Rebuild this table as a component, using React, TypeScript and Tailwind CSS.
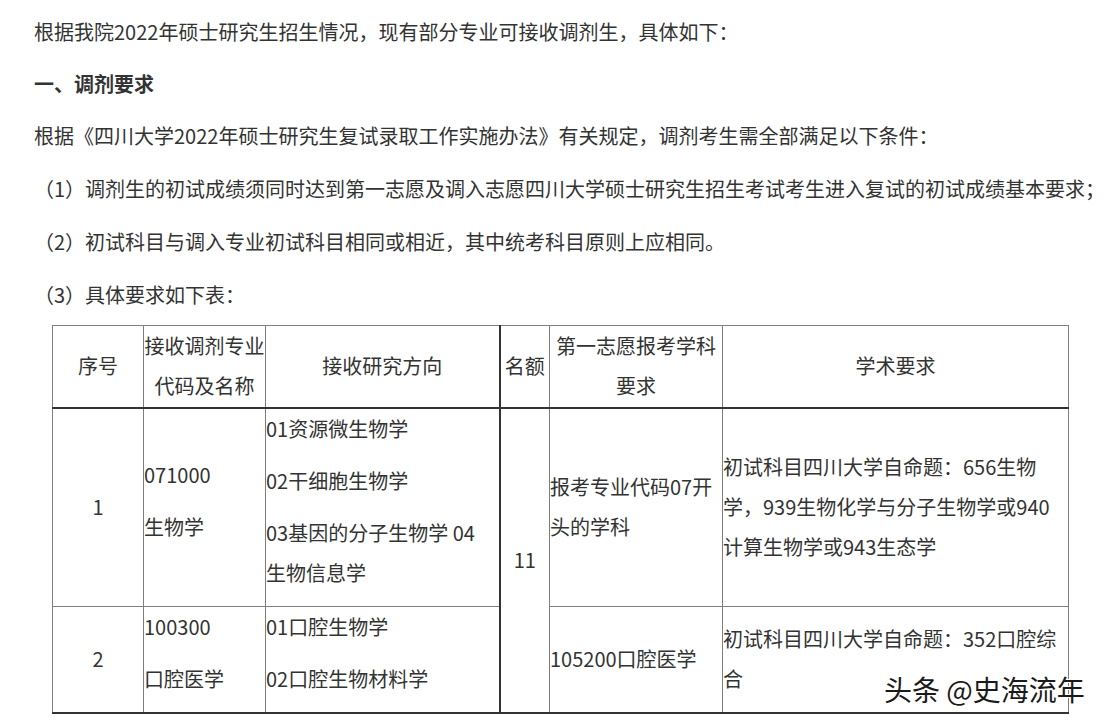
import React from 'react';

const cell = 'border border-[#7f7f7f] p-0 align-middle';

const App = () => {
  return (
    <div className="relative w-[1109px] h-[724px] overflow-hidden bg-white text-[#333] text-[20px] font-['Noto_Sans_CJK_SC',sans-serif]">
      <div className="pt-[6px] pl-[34px]">
        <p className="leading-[52px]">根据我院2022年硕士研究生招生情况，现有部分专业可接收调剂生，具体如下：</p>
        <p className="leading-[52px] font-bold">一、调剂要求</p>
        <p className="leading-[52px]">根据《四川大学2022年硕士研究生复试录取工作实施办法》有关规定，调剂考生需全部满足以下条件：</p>
        <p className="leading-[53px] whitespace-nowrap">（1）调剂生的初试成绩须同时达到第一志愿及调入志愿四川大学硕士研究生招生考试考生进入复试的初试成绩基本要求；</p>
        <p className="leading-[53px]">（2）初试科目与调入专业初试科目相同或相近，其中统考科目原则上应相同。</p>
        <p className="leading-[53px]">（3）具体要求如下表：</p>
      </div>

      <table className="ml-[52px] mt-[4px] w-[1016px] table-fixed border-collapse leading-[40px]">
        <colgroup>
          <col className="w-[91px]" />
          <col className="w-[122px]" />
          <col className="w-[234px]" />
          <col className="w-[50px]" />
          <col className="w-[173px]" />
          <col className="w-[346px]" />
        </colgroup>
        <thead>
          <tr className="h-[82px] text-center">
            <th className={`${cell} font-normal border-b-2 border-b-[#333]`}>序号</th>
            <th className={`${cell} font-normal border-b-2 border-b-[#333]`}>
              接收调剂专业
              <br />
              代码及名称
            </th>
            <th className={`${cell} font-normal border-b-2 border-b-[#333] border-r-2 border-r-[#333]`}>接收研究方向</th>
            <th className={`${cell} font-normal border-b-2 border-b-[#333]`}>名额</th>
            <th className={`${cell} font-normal border-b-2 border-b-[#333]`}>
              第一志愿报考学科
              <br />
              要求
            </th>
            <th className={`${cell} font-normal border-b-2 border-b-[#333]`}>学术要求</th>
          </tr>
        </thead>
        <tbody>
          <tr className="h-[199px]">
            <td className={`${cell} text-center`}>1</td>
            <td className={cell}>
              <p className="mb-[12px]">071000</p>
              <p className="mb-[12px]">生物学</p>
            </td>
            <td className={`${cell} border-r-2 border-r-[#333]`}>
              <p className="mb-[12px]">01资源微生物学</p>
              <p className="mb-[12px]">02干细胞生物学</p>
              <p className="mb-[12px] whitespace-nowrap">
                03基因的分子生物学 04
                <br />
                生物信息学
              </p>
            </td>
            <td rowSpan={2} className={`${cell} text-center border-b-2 border-b-[#333]`}>11</td>
            <td className={cell}>
              报考专业代码07开
              <br />
              头的学科
            </td>
            <td className={`${cell} whitespace-nowrap`}>
              初试科目四川大学自命题：656生物
              <br />
              学，939生物化学与分子生物学或940
              <br />
              计算生物学或943生态学
            </td>
          </tr>
          <tr className="h-[106px]">
            <td className={`${cell} text-center border-b-2 border-b-[#333]`}>2</td>
            <td className={`${cell} border-b-2 border-b-[#333]`}>
              <p className="mb-[12px]">100300</p>
              <p className="mb-[12px]">口腔医学</p>
            </td>
            <td className={`${cell} border-b-2 border-b-[#333] border-r-2 border-r-[#333]`}>
              <p className="mb-[12px]">01口腔生物学</p>
              <p className="mb-[12px]">02口腔生物材料学</p>
            </td>
            <td className={`${cell} border-b-2 border-b-[#333]`}>105200口腔医学</td>
            <td className={`${cell} border-b-2 border-b-[#333] whitespace-nowrap`}>
              初试科目四川大学自命题：352口腔综
              <br />
              合
            </td>
          </tr>
        </tbody>
      </table>

      {/* watermark */}
      <div className="absolute left-[884px] top-[670px] text-[28px] leading-[38px] text-[#1a1a1a] whitespace-nowrap [text-shadow:1px_1px_0_#fff,-1px_-1px_0_#fff,1px_-1px_0_#fff,-1px_1px_0_#fff]">
        头条 @史海流年
      </div>
    </div>
  );
};

export default App;
